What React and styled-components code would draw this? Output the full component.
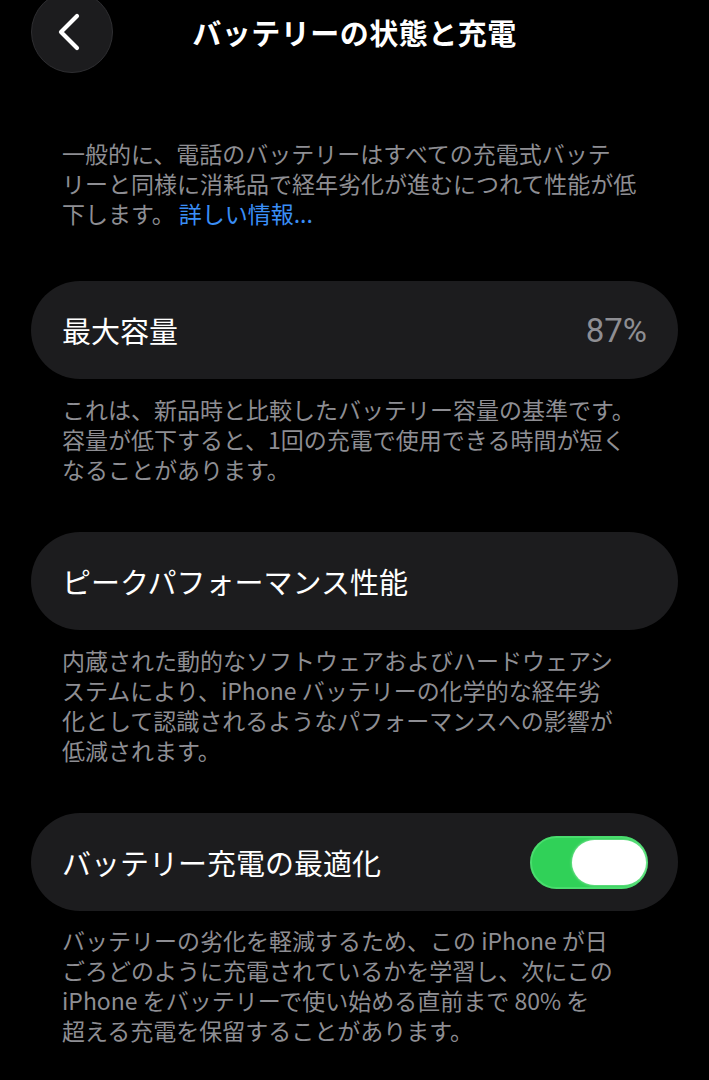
import React, { useState } from "react";
import styled, { createGlobalStyle } from "styled-components";

const GlobalStyle = createGlobalStyle`
  html, body {
    margin: 0;
    padding: 0;
    background: #000;
  }
  body {
    font-family: "Noto Sans CJK JP", "Noto Sans", sans-serif;
    color: #fff;
    -webkit-font-smoothing: antialiased;
  }
`;

const Screen = styled.div`
  width: 709px;
  min-height: 1080px;
  background: #000;
  overflow: hidden;
`;

const Header = styled.header`
  display: grid;
  grid-template-columns: 82px 1fr 82px;
  align-items: center;
  margin-top: -9px;
  padding: 0 31px;
  height: 82px;
`;

const BackButton = styled.button`
  width: 82px;
  height: 82px;
  border-radius: 50%;
  background: #1c1c1e;
  border: 1px solid #2e2e31;
  display: flex;
  align-items: center;
  justify-content: center;
  padding: 0 4px 0 0;
  cursor: pointer;
`;

const Title = styled.h1`
  margin: 0;
  text-align: center;
  font-size: 29px;
  font-weight: 700;
  letter-spacing: 0.5px;
  color: #fff;
`;

const Content = styled.main`
  padding: 0 31px;
  display: flex;
  flex-direction: column;
`;

const Note = styled.p`
  margin: ${(p) => p.$top}px 0 0;
  padding: 0 31px;
  font-size: 23px;
  line-height: 30px;
  color: #8e8e93;
  white-space: nowrap;

  span {
    display: block;
  }
`;

const Link = styled.a`
  color: #3a8ef6;
  text-decoration: none;
  margin-left: 4px;
`;

const Row = styled.div`
  margin-top: ${(p) => p.$top}px;
  height: 98px;
  border-radius: 49px;
  background: #1c1c1e;
  display: flex;
  align-items: center;
  justify-content: space-between;
  padding: 0 30px 0 31px;
`;

const Label = styled.span`
  font-size: 29px;
  font-weight: 400;
  color: #fff;
`;

const Value = styled.span`
  font-family: Roboto, "Noto Sans CJK JP", sans-serif;
  font-size: 33px;
  color: #8e8e93;
  margin-right: 1px;
`;

const Track = styled.button`
  width: 118px;
  height: 53px;
  border-radius: 27px;
  border: none;
  padding: 4px 2px 4px 4px;
  background: ${(p) => (p.$on ? "#30d158" : "#39393d")};
  box-shadow: inset 0 0 0 2px rgba(120, 240, 150, 0.35);
  display: flex;
  justify-content: ${(p) => (p.$on ? "flex-end" : "flex-start")};
  align-items: center;
  cursor: pointer;
`;

const Thumb = styled.span`
  width: 74px;
  height: 45px;
  border-radius: 23px;
  background: #fff;
  box-shadow: 0 0 3px rgba(255, 255, 255, 0.6);
`;

function Lines({ lines }) {
  return lines.map((l, i) => <span key={i}>{l}</span>);
}

export default function App() {
  const [optimized, setOptimized] = useState(true);

  return (
    <Screen>
      <GlobalStyle />
      <Header>
        <BackButton aria-label="戻る">
          <svg width="26" height="38" viewBox="0 0 26 38" fill="none">
            <path
              d="M20 3 L4 19 L20 35"
              stroke="#fff"
              strokeWidth="4.2"
              strokeLinecap="round"
              strokeLinejoin="round"
            />
          </svg>
        </BackButton>
        <Title>バッテリーの状態と充電</Title>
        <div />
      </Header>

      <Content>
        <Note $top={65}>
          <span>一般的に、電話のバッテリーはすべての充電式バッテ</span>
          <span>リーと同様に消耗品で経年劣化が進むにつれて性能が低</span>
          <span>
            下します。<Link href="#">詳しい情報...</Link>
          </span>
        </Note>

        <Row $top={53}>
          <Label>最大容量</Label>
          <Value>87%</Value>
        </Row>
        <Note $top={15}>
          <Lines
            lines={[
              "これは、新品時と比較したバッテリー容量の基準です。",
              "容量が低下すると、1回の充電で使用できる時間が短く",
              "なることがあります。",
            ]}
          />
        </Note>

        <Row $top={48}>
          <Label>ピークパフォーマンス性能</Label>
        </Row>
        <Note $top={15}>
          <Lines
            lines={[
              "内蔵された動的なソフトウェアおよびハードウェアシ",
              "ステムにより、iPhone バッテリーの化学的な経年劣",
              "化として認識されるようなパフォーマンスへの影響が",
              "低減されます。",
            ]}
          />
        </Note>

        <Row $top={48}>
          <Label>バッテリー充電の最適化</Label>
          <Track
            $on={optimized}
            onClick={() => setOptimized(!optimized)}
            aria-pressed={optimized}
          >
            <Thumb />
          </Track>
        </Row>
        <Note $top={14}>
          <Lines
            lines={[
              "バッテリーの劣化を軽減するため、この iPhone が日",
              "ごろどのように充電されているかを学習し、次にこの",
              "iPhone をバッテリーで使い始める直前まで 80% を",
              "超える充電を保留することがあります。",
            ]}
          />
        </Note>
      </Content>
    </Screen>
  );
}
